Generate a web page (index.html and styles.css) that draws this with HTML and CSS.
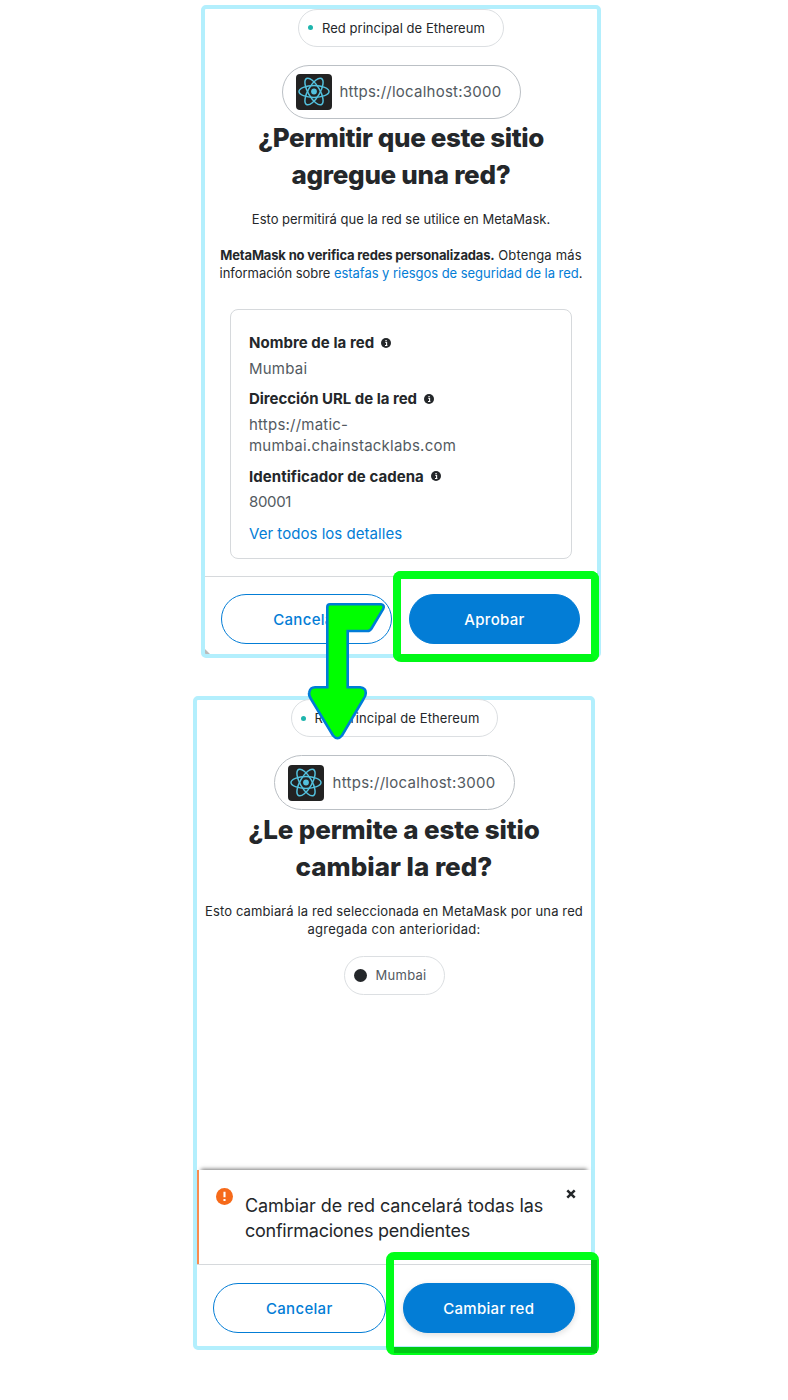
FILE: index.html
```html
<!DOCTYPE html>
<html lang="es">
<head>
<meta charset="utf-8">
<title>MetaMask</title>
<link rel="stylesheet" href="styles.css">
</head>
<body>
<svg class="defs" width="0" height="0" aria-hidden="true">
  <symbol id="react" viewBox="0 0 36 36">
    <rect width="36" height="36" rx="4" fill="#222"/>
    <g fill="none" stroke="#53c1de" stroke-width="1.5">
      <ellipse cx="18" cy="17.5" rx="15" ry="5.9"/>
      <ellipse cx="18" cy="17.5" rx="15" ry="5.9" transform="rotate(60 18 17.5)"/>
      <ellipse cx="18" cy="17.5" rx="15" ry="5.9" transform="rotate(120 18 17.5)"/>
    </g>
    <circle cx="18" cy="17.5" r="2.9" fill="#53c1de"/>
  </symbol>
  <symbol id="info" viewBox="0 0 10 10">
    <circle cx="5" cy="5" r="5" fill="#24272a"/>
    <path d="M4.1 4.2H5.6V7.3M4 7.5H6.4M4.4 2.5H5.7" stroke="#fff" stroke-width="1.1" fill="none"/>
  </symbol>
</svg>

<main class="page">
  <section class="panel panel-add">
    <div class="network-chip"><i class="dot"></i><span>Red principal de Ethereum</span></div>
    <div class="origin"><svg class="favicon"><use href="#react"/></svg><span>https://localhost:3000</span></div>
    <h1><span class="title-tight">¿Permitir que este sitio</span><br><span class="title-snug">agregue una red?</span></h1>
    <p class="copy">Esto permitirá que la red se utilice en MetaMask.</p>
    <p class="copy copy-warning"><b>MetaMask no verifica redes personalizadas.</b> <span class="learn">Obtenga más</span><br><span class="scams">información sobre <a>estafas y riesgos de seguridad de la red</a>.</span></p>
    <dl class="details">
      <dt><span>Nombre de la red</span><svg class="info"><use href="#info"/></svg></dt>
      <dd>Mumbai</dd>
      <dt><span class="rpc-label">Dirección URL de la red</span><svg class="info"><use href="#info"/></svg></dt>
      <dd>https://matic-<br>mumbai.chainstacklabs.com</dd>
      <dt><span>Identificador de cadena</span><svg class="info"><use href="#info"/></svg></dt>
      <dd class="chain-id">80001</dd>
      <dd class="more"><a>Ver todos los detalles</a></dd>
    </dl>
    <footer><button class="btn">Cancelar</button><button class="btn primary">Aprobar</button></footer>
  </section>

  <section class="panel panel-switch">
    <div class="network-chip"><i class="dot"></i><span>Red principal de Ethereum</span></div>
    <div class="origin"><svg class="favicon"><use href="#react"/></svg><span>https://localhost:3000</span></div>
    <h1><span class="title-first">¿Le permite a este sitio</span><br><span>cambiar la red?</span></h1>
    <p class="copy"><span class="switch-copy">Esto cambiará la red seleccionada en MetaMask por una red</span><br><span class="switch-copy-end">agregada con anterioridad:</span></p>
    <div class="target-chip"><i class="target-dot"></i><span>Mumbai</span></div>
    <div class="alert">
      <svg class="alert-icon" viewBox="0 0 17 17"><circle cx="8.5" cy="8.5" r="8.5" fill="#f66a1a"/><path d="M8.5 3.8V9.3M8.5 11V13" stroke="#fff" stroke-width="2.1"/></svg>
      <p>Cambiar de red cancelará todas las<br><span class="pending">confirmaciones pendientes</span></p>
      <svg class="close" viewBox="0 0 10 10"><path d="M1.3 1.3L8.7 8.7M8.7 1.3L1.3 8.7" stroke="#24272a" stroke-width="2.5"/></svg>
    </div>
    <footer><button class="btn">Cancelar</button><button class="btn primary raised">Cambiar red</button></footer>
  </section>

  <div class="highlight highlight-approve"></div>
  <div class="highlight highlight-switch"></div>
  <svg class="arrow" viewBox="300 595 100 150" width="100" height="150">
    <path d="M330 604.3H381Q385 605 383.2 609L371.5 628.5Q370 631 367.5 631H347.7V687.3H360Q366 688 365.8 693Q365.8 696 363.5 699L342 735.5Q337.5 741 333 735.5L311 699Q308.5 695 309.2 692.5Q310.3 687.3 315 687.3H327.3V607Q327.3 604.3 330 604.3Z" fill="#0f0" stroke="#007cd7" stroke-width="2.6"/>
  </svg>
</main>
</body>
</html>
```
FILE: styles.css
```css
* { box-sizing: border-box; }
body { margin: 0; background: #fff; color: #24272a; font-family: Inter, "Open Sans", sans-serif; }
.page { position: relative; width: 788px; height: 1400px; padding-top: 5px; overflow: hidden; }
.defs { position: absolute; }
.panel { display: flex; flex-direction: column; align-items: center; border: 4px solid #b3effd; border-radius: 5px; background: #fff; white-space: nowrap; }
.panel-add { width: 400px; height: 653px; margin-left: 201px; background: linear-gradient(45deg, #bbb 3px, #fff 4px); }
.panel-switch { width: 402px; height: 654px; margin: 38px 0 0 193px; }
.network-chip { display: flex; align-items: center; width: 206px; height: 38px; flex: none; margin-top: -0.5px; border: 1px solid #dcdfe2; border-radius: 19px; padding-left: 9px; gap: 9px; font-size: 13px; letter-spacing: .04px; }
.panel-switch .network-chip { width: 207px; margin-top: -1px; letter-spacing: .12px; }
.dot { width: 5px; height: 5px; border-radius: 50%; background: #1eb5ad; }
.origin { display: flex; align-items: center; width: 239px; height: 54px; flex: none; margin-top: 18px; border: 1px solid #bbc0c5; border-radius: 28px; padding-left: 13px; gap: 8px; font-size: 15px; letter-spacing: .24px; color: #535a61; }
.panel-switch .origin { width: 241px; height: 55px; gap: 9px; letter-spacing: .29px; }
.favicon { width: 36px; height: 36px; }
h1 { margin: 0; font-size: 26px; line-height: 37px; font-weight: 800; text-align: center; }
.panel-switch h1 { margin-top: 0.5px; }
.title-tight { letter-spacing: -.39px; }
.title-snug { letter-spacing: -.29px; }
.title-first { letter-spacing: -.14px; }
.copy { margin: 17px 0 0; font-size: 13px; line-height: 18.5px; text-align: center; }
.copy-warning { margin-top: 17.5px; }
.copy-warning b { letter-spacing: -.16px; }
.learn { letter-spacing: .16px; }
.scams { letter-spacing: -.04px; }
.switch-copy { letter-spacing: .12px; }
.switch-copy-end { letter-spacing: .26px; }
a { color: #037dd6; }
.details { width: 342px; height: 250px; flex: none; margin: 26px 0 0; padding: 22px 18px 0; border: 1px solid #d6d9dc; border-radius: 8px; font-size: 15px; }
dt { display: flex; align-items: center; gap: 7px; height: 22px; font-weight: 700; margin-bottom: 4px; letter-spacing: .05px; }
.rpc-label { letter-spacing: -.03px; }
dd { margin: 0 0 9px; line-height: 21.3px; letter-spacing: .22px; color: #535a61; }
dd.chain-id { letter-spacing: -.36px; margin-bottom: 10px; }
dd.more { letter-spacing: .04px; }
.info { width: 10px; height: 10px; }
footer { display: flex; gap: 17px; width: 100%; margin-top: auto; height: 78px; padding: 17px 16px 0; border-top: 1px solid #d6d9dc; }
.btn { width: 171px; height: 50px; padding: 0; border: 1px solid #037dd6; border-radius: 25px; background: #fff; color: #037dd6; font: 500 15px Inter, sans-serif; letter-spacing: .3px; }
.primary { background: #037dd6; color: #fff; }
.panel-switch .btn { width: 173px; }
.raised { box-shadow: 0 2px 6px #0002; }
.target-chip { display: flex; align-items: center; width: 101px; height: 39px; flex: none; margin-top: 17px; border: 1px solid #dcdfe2; border-radius: 20px; padding-left: 9px; gap: 9px; font-size: 13px; letter-spacing: .27px; color: #535a61; }
.target-dot { width: 13px; height: 13px; border-radius: 50%; background: #24272a; }
.alert { display: flex; align-items: flex-start; width: 100%; height: 94px; margin-top: auto; border-left: 2px solid #f98c50; padding: 18px 15px 0 17px; box-shadow: 0 -5px 4px -4px #0008; }
.alert-icon { width: 17px; height: 17px; }
.alert p { margin: 4.5px auto 0 12px; font-size: 18px; line-height: 25px; letter-spacing: -.07px; }
.pending { letter-spacing: -.25px; }
.close { width: 10px; height: 10px; margin-top: 1px; }
.panel-switch footer { margin-top: 0; height: 82px; padding-top: 18px; }
.highlight { position: absolute; border: 8px solid #00ff19; border-radius: 8px; }
.highlight-approve { left: 393px; top: 571px; width: 206px; height: 91px; border-bottom-color: #00f817; }
.highlight-switch { left: 386px; top: 1252px; width: 213px; height: 103px; }
.highlight-switch::after { content: ""; position: absolute; inset: 0 -6px -6px 0; border: solid #00c915; border-width: 0 6px 6px 0; }
.arrow { position: absolute; left: 300px; top: 595px; }
```
